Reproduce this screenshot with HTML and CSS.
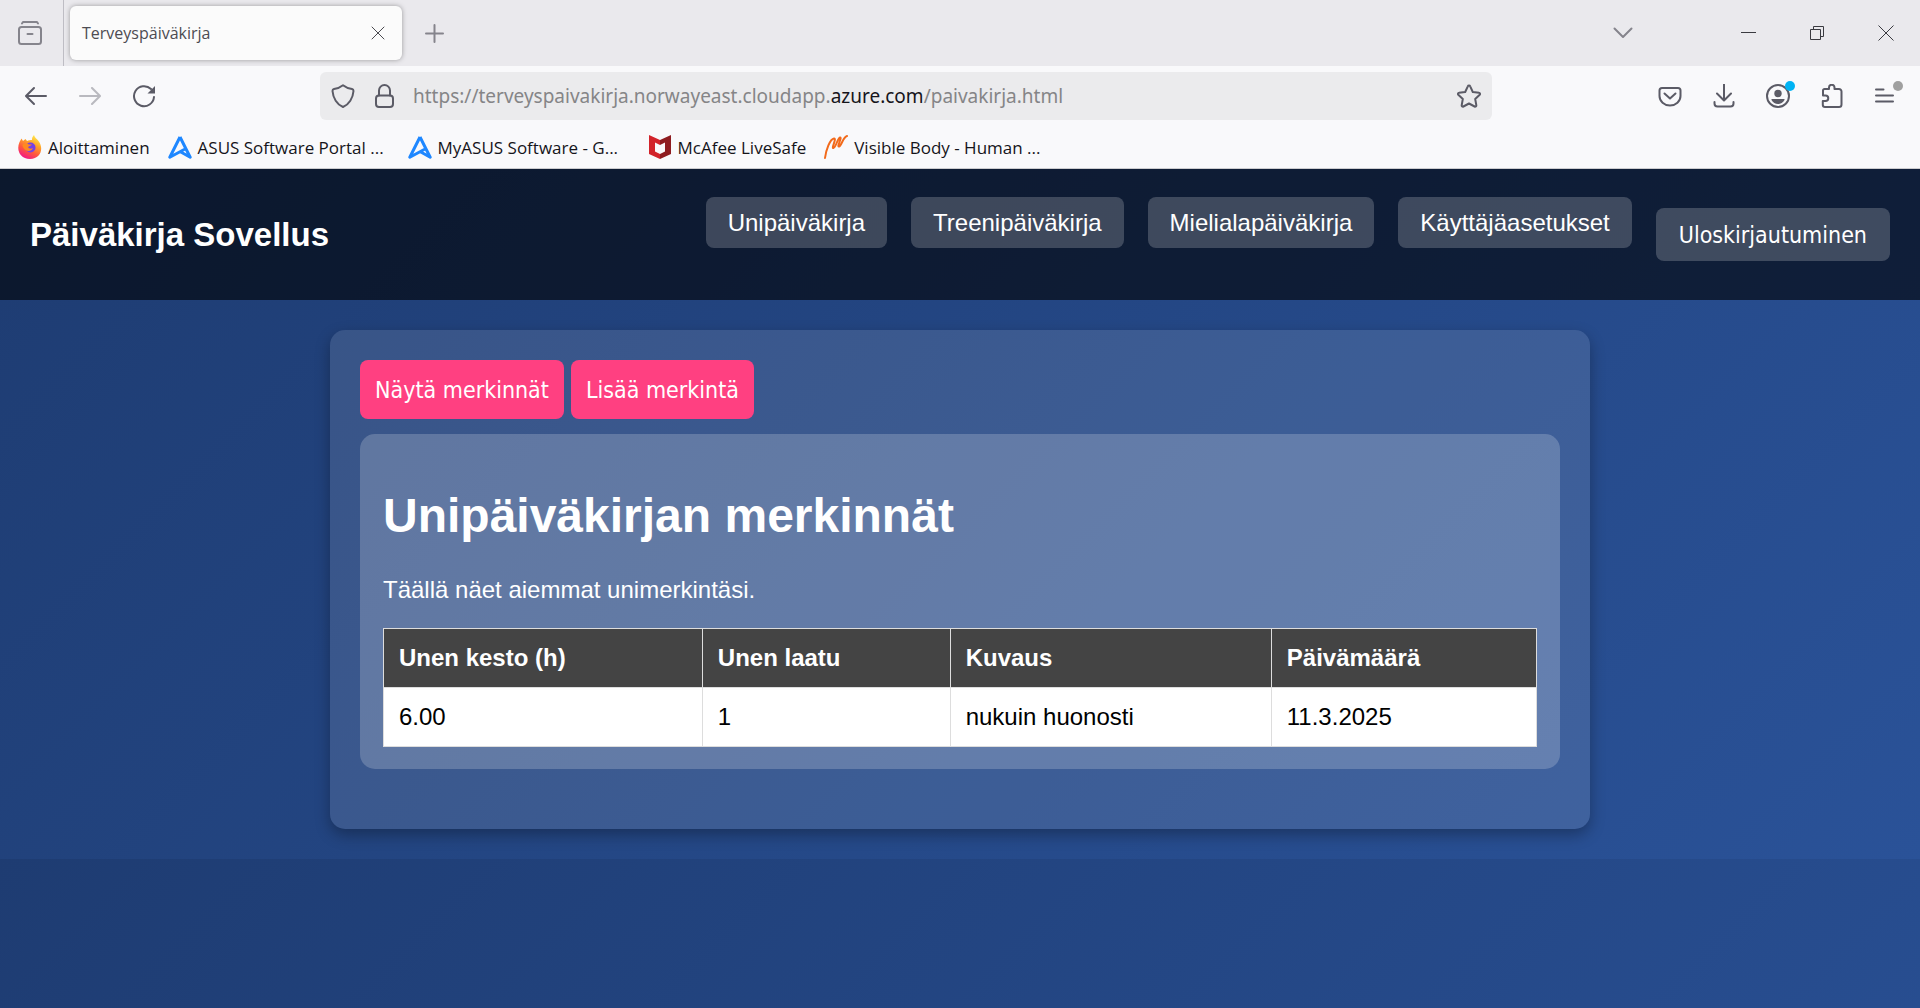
FILE: index.html
```
<!DOCTYPE html>
<html lang="fi">
<head>
<meta charset="utf-8">
<title>Terveyspäiväkirja</title>
<link rel="stylesheet" href="styles.css">
</head>
<body>
<div class="tabbar">
  <button class="tool view-button" aria-label="Firefox View">
    <svg class="icon muted" viewBox="0 0 24 24"><path d="M4 2.500 5 1h14l1 1.500"/><rect x="1" y="6" width="22" height="17" rx="2.500"/><path d="M9.500 13h5"/></svg>
  </button>
  <div class="tab">
    <span class="tab-title">Terveyspäiväkirja</span>
    <button class="tool" aria-label="Sulje välilehti"><svg class="icon thin" viewBox="0 0 24 24"><path d="m6 6 12 12M18 6 6 18"/></svg></button>
  </div>
  <button class="tool new-tab" aria-label="Uusi välilehti"><svg class="icon muted thin" viewBox="0 0 24 24"><path d="M12.500 4v17M4 12.500h17"/></svg></button>
  <div class="window-controls">
    <button class="tool all-tabs" aria-label="Luettele välilehdet"><svg class="icon muted thin" viewBox="0 0 24 24"><path d="m3.500 7.500 8.500 8.500 8.500-8.500"/></svg></button>
    <button class="tool" aria-label="Pienennä"><svg class="icon hair" viewBox="0 0 24 24"><path d="M5 11.500h15"/></svg></button>
    <button class="tool" aria-label="Palauta"><svg class="icon hair" viewBox="0 0 24 24"><path d="M5.500 8.500h10v10h-10zM8.500 8.500v-3h10v10h-3"/></svg></button>
    <button class="tool" aria-label="Sulje"><svg class="icon hair" viewBox="0 0 24 24"><path d="m4.500 4.500 15 15M19.500 4.500l-15 15"/></svg></button>
  </div>
</div>

<div class="toolbar">
  <div class="history">
    <button class="tool" aria-label="Takaisin"><svg class="icon" viewBox="0 0 24 24"><path d="M22 12H2.500M10 4l-8 8 8 8"/></svg></button>
    <button class="tool faded" aria-label="Eteenpäin" disabled><svg class="icon" viewBox="0 0 24 24"><path d="M2 12h19.500M14 4l8 8-8 8"/></svg></button>
    <button class="tool" aria-label="Päivitä"><svg class="icon" viewBox="0 0 24 24"><path d="M22 13A10 10 0 1 1 19 5"/><path class="solid" d="M23 2v7.500h-7.500z"/></svg></button>
  </div>
  <div class="urlbar">
    <svg class="icon" viewBox="0 0 24 24"><path d="M12 1.200c2.500 2 6 3.300 9 3.800a2 2 0 0 1 1.500 2C22 14 18 20.500 12 23 6 20.500 2 14 1.500 7A2 2 0 0 1 3 5c3-.5 6.500-1.800 9-3.800z"/></svg>
    <svg class="icon" viewBox="0 0 24 24"><rect x="4" y="11.500" width="17" height="11.500" rx="3"/><path d="M7 11.500V6.500a5.500 5.500 0 0 1 11 0v5"/></svg>
    <span class="url">https://terveyspaivakirja.norwayeast.cloudapp.<span class="domain">azure.com</span>/paivakirja.html</span>
    <button class="tool" aria-label="Lisää kirjanmerkki"><svg class="icon" viewBox="0 0 24 24"><path d="M12 1.500c.6 0 1 .3 1.200.8L15.800 8l6.200.8c1 .1 1.400 1.200.7 1.900L18.200 15l1.100 6.200c.2 1-.8 1.700-1.700 1.300L12 19.500l-5.600 3c-.9.400-1.900-.3-1.700-1.300L5.800 15 1.300 10.700C.6 10 1 8.900 2 8.800L8.200 8l2.600-5.700c.2-.5.600-.8 1.200-.8z"/></svg></button>
  </div>
  <div class="actions">
    <button class="tool" aria-label="Pocket"><svg class="icon" viewBox="0 0 24 24"><path d="M4 4h16a2.500 2.500 0 0 1 2.500 2.500V12a10.500 9.500 0 0 1-21 0V6.500A2.500 2.500 0 0 1 4 4z"/><path d="m6.500 9.500 5.500 5 5.500-5"/></svg></button>
    <button class="tool" aria-label="Lataukset"><svg class="icon" viewBox="0 0 24 24"><path d="M12 .500V16M5 9.500l7 7 7-7M2.500 18v1.500a3 3 0 0 0 3 3h13a3 3 0 0 0 3-3V18"/></svg></button>
    <button class="tool" aria-label="Tili"><svg class="icon" viewBox="0 0 24 24"><circle cx="12" cy="12" r="11"/><circle class="solid" cx="12" cy="9.500" r="3.700"/><path class="solid" d="M6 15h12c.6 0 .8.600.500 1.100C17 18.800 14.700 20 12 20s-5-1.200-6.500-3.900C5.200 15.600 5.400 15 6 15z"/></svg><span class="dot dot-blue"></span></button>
    <button class="tool" aria-label="Laajennukset"><svg class="icon" viewBox="0 0 24 24"><path d="M3 11V6.500A1.500 1.500 0 0 1 4.500 5H9V3.500a2.700 2.700 0 0 1 5.500 0V5H19a2.500 2.500 0 0 1 2.500 2.500v13A2.500 2.500 0 0 1 19 23H5a2.200 2.200 0 0 1-2.200-2.200V17h2.700a2.700 2.700 0 0 0 0-5.500H3z"/></svg></button>
    <button class="tool" aria-label="Valikko"><svg class="icon" viewBox="0 0 24 24"><path d="M2 5.500h7.500M2 11.500h17M2 17.500h17"/></svg><span class="dot dot-grey"></span></button>
  </div>
</div>

<nav class="bookmarks" aria-label="Kirjanmerkit">
  <a href="#"><svg class="logo" viewBox="0 0 24 24"><defs><linearGradient id="fox" x1=".8" y1="0" x2=".3" y2="1"><stop offset="0" stop-color="#fff44f"/><stop offset=".35" stop-color="#ffa42a"/><stop offset=".65" stop-color="#ff5a3c"/><stop offset="1" stop-color="#f0148b"/></linearGradient></defs><path fill="url(#fox)" d="M1.500 7 3.500 3.500 5 6l2.500-2L9 6c2-1 3-1 5-1 0-2 .5-3.500 2-5 .5 2.500 3 4 4.500 6C26 13 23 24 12 24 2 24-2 15 1.500 7z"/><circle cx="12.500" cy="12.500" r="5" fill="#7542e5"/><path fill="#ff8a20" d="M4.500 10C6 8 9 8 11 9.500h3C12.500 11 11 11 10 12c1 2 3 2 5 1-1.500 4-7 4-9.500 0-.6-1-1-2-1-3z"/></svg><span>Aloittaminen</span></a>
  <a href="#"><svg class="logo asus" viewBox="0 0 24 24"><path d="M12 2 1.800 22.200 18 13.500M12 2l10.200 20.200-9.800-5.500"/></svg><span>ASUS Software Portal ...</span></a>
  <a href="#"><svg class="logo asus" viewBox="0 0 24 24"><path d="M12 2 1.800 22.200 18 13.500M12 2l10.200 20.200-9.800-5.500"/></svg><span>MyASUS Software - G...</span></a>
  <a href="#"><svg class="logo" viewBox="0 0 24 24"><path fill="#d2232a" d="m1 0 11 5v5L7 7.500v9l5 2.500v5L1 19z"/><path fill="#8e1c20" d="m23 0-11 5v5l5-2.500v9L12 19v5l11-5z"/></svg><span>McAfee LiveSafe</span></a>
  <a href="#"><svg class="logo" viewBox="0 0 24 24"><path fill="none" stroke="#f26a1b" stroke-width="2" stroke-linecap="round" d="M1 23C2 15 6 4 10 3.500c3 0-3 10-.500 9.500s4-10 6.500-10.500-3.500 9.500-1 9S19 2 23 1"/></svg><span>Visible Body - Human ...</span></a>
</nav>

<div class="page">
  <header class="site-header">
    <div class="brand">Päiväkirja Sovellus</div>
    <nav class="site-nav">
      <a href="#uni">Unipäiväkirja</a>
      <a href="#treeni">Treenipäiväkirja</a>
      <a href="#mieliala">Mielialapäiväkirja</a>
      <a href="#asetukset">Käyttäjäasetukset</a>
      <button class="logout" type="button">Uloskirjautuminen</button>
    </nav>
  </header>
  <main class="container">
    <div class="entry-actions">
      <button type="button">Näytä merkinnät</button>
      <button type="button">Lisää merkintä</button>
    </div>
    <section class="entries">
      <h1>Unipäiväkirjan merkinnät</h1>
      <p>Täällä näet aiemmat unimerkintäsi.</p>
      <table>
        <thead><tr><th>Unen kesto (h)</th><th>Unen laatu</th><th>Kuvaus</th><th>Päivämäärä</th></tr></thead>
        <tbody><tr><td>6.00</td><td>1</td><td>nukuin huonosti</td><td>11.3.2025</td></tr></tbody>
      </table>
    </section>
  </main>
</div>
</body>
</html>
```
FILE: styles.css
```
* { box-sizing: border-box; }

body {
  margin: 0;
  min-height: 100vh;
  display: flex;
  flex-direction: column;
  font-family: "Open Sans", "Noto Sans", sans-serif;
  background: #f9f9fb;
  color: #15141a;
}

button { font: inherit; color: inherit; border: 0; margin: 0; padding: 0; background: none; }

/* Browser icons */
.icon {
  display: block;
  flex: none;
  width: 24px;
  height: 24px;
  fill: none;
  stroke: #5b5b66;
  stroke-width: 2;
  stroke-linecap: round;
  stroke-linejoin: round;
}
.icon .solid { fill: #5b5b66; stroke: none; }
.muted { stroke: #85848c; }
.thin { stroke-width: 2; }
.hair { stroke: #3a3a40; stroke-width: 1; stroke-linecap: butt; stroke-linejoin: miter; }
.tool { position: relative; flex: none; }
.faded { opacity: .4; }

/* Tab bar */
.tabbar {
  display: flex;
  align-items: center;
  height: 66px;
  background: #eae9ed;
}
.view-button {
  align-self: stretch;
  width: 64px;
  padding-left: 18px;
  border-right: 1px solid #bebdc4;
}
.tab {
  display: flex;
  align-items: center;
  justify-content: space-between;
  width: 332px;
  height: 54px;
  margin-left: 6px;
  padding: 0 12px;
  border-radius: 6px;
  background: #fbfbfb;
  box-shadow: 0 0 5px rgba(0, 0, 0, .35);
}
.tab .icon { stroke: #4a4a50; stroke-width: 1; }
.tab-title { font-size: 16px; color: #4d4c52; }
.new-tab { margin-left: 20px; }
.window-controls { display: flex; gap: 45px; margin-left: auto; padding-right: 22px; }
.all-tabs { margin-right: 56px; }

/* Toolbar */
.toolbar { display: flex; align-items: center; height: 60px; padding: 0 22px 0 24px; }
.history { display: flex; gap: 30px; width: 296px; }
.urlbar {
  display: flex;
  align-items: center;
  flex: 0 1 1172px;
  height: 48px;
  padding: 0 11px;
  border-radius: 6px;
  background: #ebebed;
}
.urlbar > .icon { margin-right: 17px; }
.url { flex: 1; white-space: nowrap; font-family: "Noto Sans", sans-serif; font-size: 19px; color: #858587; }
.domain { color: #15141a; }
.actions { display: flex; gap: 30px; margin-left: auto; }
.dot { position: absolute; top: -3px; right: -5px; width: 10px; height: 10px; border-radius: 50%; }
.dot-blue { background: #00b3f4; }
.dot-grey { background: #a0a0a0; }

/* Bookmarks */
.bookmarks {
  display: flex;
  gap: 18px;
  height: 43px;
  padding: 0 18px;
  border-bottom: 1px solid #cccccf;
}
.bookmarks a {
  display: flex;
  align-items: center;
  gap: 6px;
  height: 42px;
  font-size: 17px;
  color: #15141a;
  text-decoration: none;
  white-space: nowrap;
}
.bookmarks a:nth-child(2), .bookmarks a:nth-child(3) { width: 222px; }
.logo { width: 24px; height: 24px; flex: none; }
.asus { fill: none; stroke: #1e87ff; stroke-width: 3; stroke-linejoin: round; }

/* Diary page */
.page {
  flex: 1;
  font-family: "Liberation Sans", Arial, sans-serif;
  font-size: 24px;
  color: #fff;
  background: linear-gradient(135deg, #1e3c72, #2a5298) 0 0 / 100% 690px;
}
.site-header {
  display: flex;
  align-items: center;
  justify-content: space-between;
  min-height: 131px;
  padding: 28px 30px;
  background: rgba(0, 0, 0, .6);
}
.brand { font-size: 33px; font-weight: bold; }
.site-nav { display: flex; align-items: flex-start; align-self: flex-start; gap: 24px; }
.site-nav a, .logout {
  padding: 12px 22px;
  border-radius: 8px;
  line-height: 27px;
  color: #fff;
  text-decoration: none;
  background: rgba(255, 255, 255, .2);
}
.site-nav .logout { margin-top: 11px; padding: 13px 23px 11px; line-height: 29px; }
.logout, .entry-actions button { font-family: "DejaVu Sans Condensed", Tahoma, sans-serif; font-size: 23px; }

.container {
  width: calc(100% - 60px);
  max-width: 1260px;
  margin: 30px auto;
  padding: 30px 30px 60px;
  border-radius: 15px;
  background: rgba(255, 255, 255, .11);
  box-shadow: 0 6px 15px rgba(0, 0, 0, .3);
}
.entry-actions { display: flex; gap: 7px; }
.entry-actions button {
  padding: 16px 15px 14px;
  border-radius: 8px;
  line-height: 29px;
  background: #ff4081;
}
.entries {
  margin-top: 15px;
  padding: 23px 23px 22px;
  border-radius: 15px;
  background: rgba(255, 255, 255, .2);
}
h1 { margin: 32px 0; font-size: 48px; line-height: 54px; }
p { margin: 0 0 24px; line-height: 29px; }
table { width: 100%; border-collapse: collapse; background: #fff; color: #000; }
th, td { padding: 15px; border: 1px solid #ddd; text-align: left; line-height: 28px; }
th { background: #444; color: #fff; }
```
